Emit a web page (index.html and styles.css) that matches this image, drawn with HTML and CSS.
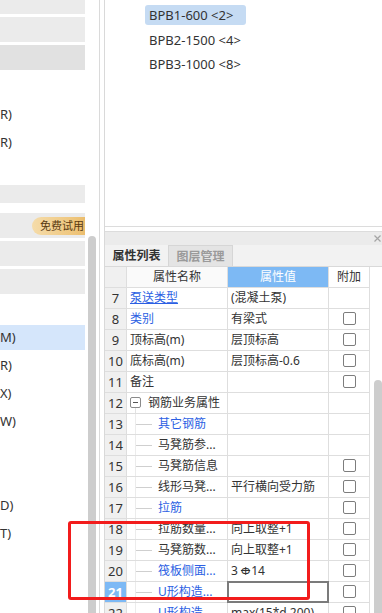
FILE: index.html
```html
<!DOCTYPE html>
<html lang="zh-CN">
<head>
<meta charset="utf-8">
<title>属性列表</title>
<link rel="stylesheet" href="styles.css">
</head>
<body>
<div class="app">
  <div class="left">
    <div class="bar b1"></div>
    <div class="bar"></div>
    <div class="bar dark"></div>
    <div class="item first">R)</div>
    <div class="item">R)</div>
    <div class="bar b4"></div>
    <div class="bar badge-bar"><span class="badge">免费试用</span></div>
    <div class="bar"></div>
    <div class="bar"></div>
    <div class="item sel">M)</div>
    <div class="item after-sel">R)</div>
    <div class="item">X)</div>
    <div class="item">W)</div>
    <div class="item gap">D)</div>
    <div class="item">T)</div>
  </div>
  <div class="lscroll"><div class="lthumb"></div></div>
  <div class="gutter"></div>
  <div class="right">
    <div class="top">
      <div class="plist">
        <div class="pitem selected">BPB1-600 &lt;2&gt;</div>
        <div class="pitem">BPB2-1500 &lt;4&gt;</div>
        <div class="pitem">BPB3-1000 &lt;8&gt;</div>
      </div>
    </div>
    <div class="props">
      <div class="titlebar">
        <svg class="close" width="7" height="7" viewBox="0 0 7 7"><path d="M0.5 0.5L6.5 6.5M6.5 0.5L0.5 6.5" stroke="#a5a5a5" stroke-width="1.2"/></svg>
      </div>
      <div class="tabs">
        <div class="tab active">属性列表</div>
        <div class="tab">图层管理</div>
      </div>
      <div class="tablewrap">
        <div class="grid">
          <div class="c num hd"></div><div class="c hd name-hd">属性名称</div><div class="c hd val-hd">属性值</div><div class="c hd add-hd">附加</div>

          <div class="c num">7</div><div class="c name link u">泵送类型</div><div class="c val">(混凝土泵)</div><div class="c add"></div>
          <div class="c num">8</div><div class="c name link">类别</div><div class="c val">有梁式</div><div class="c add"><span class="cb"></span></div>
          <div class="c num">9</div><div class="c name">顶标高(m)</div><div class="c val">层顶标高</div><div class="c add"><span class="cb"></span></div>
          <div class="c num">10</div><div class="c name">底标高(m)</div><div class="c val">层顶标高-0.6</div><div class="c add"><span class="cb"></span></div>
          <div class="c num">11</div><div class="c name">备注</div><div class="c val"></div><div class="c add"><span class="cb"></span></div>
          <div class="c num">12</div><div class="c name group"><span class="minus"></span>钢筋业务属性</div><div class="c val"></div><div class="c add"></div>
          <div class="c num">13</div><div class="c name tree link">其它钢筋</div><div class="c val"></div><div class="c add"></div>
          <div class="c num">14</div><div class="c name tree">马凳筋参...</div><div class="c val"></div><div class="c add"></div>
          <div class="c num">15</div><div class="c name tree">马凳筋信息</div><div class="c val"></div><div class="c add"><span class="cb"></span></div>
          <div class="c num">16</div><div class="c name tree">线形马凳...</div><div class="c val">平行横向受力筋</div><div class="c add"><span class="cb"></span></div>
          <div class="c num">17</div><div class="c name tree link">拉筋</div><div class="c val"></div><div class="c add"><span class="cb"></span></div>
          <div class="c num">18</div><div class="c name tree">拉筋数量...</div><div class="c val">向上取整+1</div><div class="c add"><span class="cb"></span></div>
          <div class="c num">19</div><div class="c name tree">马凳筋数...</div><div class="c val">向上取整+1</div><div class="c add"><span class="cb"></span></div>
          <div class="c num">20</div><div class="c name tree link">筏板侧面...</div><div class="c val">3<span class="rebar">Φ</span>14</div><div class="c add"><span class="cb"></span></div>
          <div class="c num cur">21</div><div class="c name tree link">U形构造...</div><div class="c val edit"></div><div class="c add"><span class="cb"></span></div>
          <div class="c num">22</div><div class="c name tree link">U形构造...</div><div class="c val">max(15*d,200)</div><div class="c add"><span class="cb"></span></div>
        </div>
        <div class="vscroll"><div class="vthumb"></div></div>
      </div>
    </div>
  </div>
  <div class="redbox"></div>
</div>
</body>
</html>
```

FILE: styles.css
```css
html, body {
  margin: 0;
  padding: 0;
  background: #fff;
}
body {
  font-family: "Noto Sans", "Noto Sans CJK SC", sans-serif;
  color: #333;
}
.app {
  position: relative;
  display: flex;
  width: 382px;
  height: 613px;
  overflow: hidden;
}

/* left panel */
.left {
  width: 85px;
  flex: none;
  overflow: hidden;
  font-size: 13px;
}
.bar {
  height: 25px;
  margin-top: 3px;
  background: #ebebeb;
}
.bar.b1 { height: 14px; margin-top: 0; }
.bar.dark { background: #e1e1e1; }
.bar.b4 { height: 18px; margin-top: 29px; }
.bar.badge-bar {
  margin-top: 10px;
  display: flex;
  align-items: center;
}
.badge {
  margin-left: 32px;
  height: 18px;
  line-height: 18px;
  padding: 0 14px 0 8px;
  border-radius: 9px 0 0 9px;
  background: linear-gradient(90deg, #f5dcaa 0%, #efc77f 60%, #e8b45c 100%);
  color: #5a3b12;
  font-size: 11px;
  white-space: nowrap;
}
.item {
  height: 28px;
  line-height: 28px;
  white-space: nowrap;
}
.item.first { margin-top: 30px; }
.item.sel {
  height: 25px;
  line-height: 25px;
  margin-top: 31px;
  background: #d5e6fb;
}
.item.after-sel { margin-top: 1px; }
.item.gap { margin-top: 56px; }

.lscroll {
  width: 14px;
  flex: none;
  padding-top: 236px;
  box-sizing: border-box;
}
.lthumb {
  margin-left: 3px;
  width: 8px;
  height: 400px;
  background: #cdcdcd;
  border-radius: 4px;
}
.gutter {
  width: 4px;
  flex: none;
  border-left: 1px solid #dadada;
}

/* right panel */
.right {
  flex: 1;
  min-width: 0;
  border-left: 1px solid #d9d9d9;
  display: flex;
  flex-direction: column;
}
.top {
  height: 226px;
  flex: none;
  border-bottom: 1px solid #dcdcdc;
}
.plist {
  padding: 5px 0 0 40px;
  display: flex;
  flex-direction: column;
  align-items: flex-start;
  gap: 4.5px;
}
.pitem {
  height: 20px;
  line-height: 20px;
  padding: 0 13px 0 4px;
  font-size: 13px;
  color: #333;
  border-radius: 3px;
  white-space: nowrap;
}
.pitem.selected { background: #c5dbf3; }

.props {
  margin-top: 4px;
  flex: 1;
  display: flex;
  flex-direction: column;
}
.titlebar {
  height: 13px;
  border-top: 1px solid #dcdcdc;
  background: #ebebeb;
  display: flex;
  justify-content: flex-end;
  align-items: center;
  padding-right: 1px;
}
.tabs {
  height: 21px;
  display: flex;
  background: #f2f2f2;
  border-bottom: 1px solid #d9d9d9;
}
.tab {
  width: 64px;
  text-align: center;
  line-height: 21px;
  font-size: 12px;
  font-weight: bold;
  color: #9a9a9a;
  background: #e4e4e4;
  border-right: 1px solid #d6d6d6;
  border-top: 1px solid #d6d6d6;
  box-sizing: border-box;
}
.tab.active {
  color: #333;
  background: #f2f2f2;
  border-top: none;
}

.tablewrap {
  display: flex;
  flex: 1;
}
.grid {
  display: grid;
  grid-template-columns: 22px 101px 101px 41px;
  grid-auto-rows: 21px;
  font-size: 12px;
}
.c {
  box-sizing: border-box;
  border-right: 1px solid #dedede;
  border-bottom: 1px solid #dedede;
  line-height: 20px;
  white-space: nowrap;
  overflow: hidden;
  position: relative;
}
.num {
  background: #f0f0f0;
  text-align: center;
  font-size: 13px;
  color: #333;
}
.num.cur {
  background: #7db9f5;
  color: #fff;
  font-weight: bold;
}
.hd { text-align: center; }
.name-hd { background: #fafafa; }
.val-hd { background: #7db9f4; color: #fff; }
.add-hd { background: #fff; }
.name { padding-left: 3px; }
.val { padding-left: 3px; }
.link { color: #2c5fe3; }
.u { text-decoration: underline; }
.name.group { padding-left: 21px; }
.minus {
  position: absolute;
  left: 3px;
  top: 4px;
  width: 11px;
  height: 11px;
  box-sizing: border-box;
  border: 1px solid #8a8a8a;
  border-radius: 2px;
}
.minus::after {
  content: "";
  position: absolute;
  left: 2px;
  top: 4px;
  width: 5px;
  height: 1px;
  background: #555;
}
.name.group::after {
  content: "";
  position: absolute;
  left: 8px;
  top: 15px;
  bottom: -1px;
  width: 1px;
  background: #e2e2e2;
}
.name.tree { padding-left: 31px; }
.name.tree::before {
  content: "";
  position: absolute;
  left: 9px;
  top: 10px;
  width: 16px;
  height: 1px;
  background: #cfcfcf;
}
.name.tree::after {
  content: "";
  position: absolute;
  left: 8px;
  top: 0;
  bottom: -1px;
  width: 1px;
  background: #ececec;
}
.rebar {
  text-decoration: line-through;
  margin: 0 1px 0 3px;
  font-size: 11px;
}
.val.edit {
  border: 2px solid #7b7b7b;
  margin: -1px 0 0 -1px;
  width: 102px;
  height: 22px;
}
.add {
  display: flex;
  justify-content: center;
  align-items: center;
  padding-bottom: 1px;
}
.cb {
  width: 13px;
  height: 13px;
  box-sizing: border-box;
  border: 1px solid #7d7d7d;
  border-radius: 2px;
  background: #fff;
}
.vscroll {
  flex: 1;
  padding: 113px 0 0 4px;
}
.vthumb {
  width: 8px;
  height: 260px;
  background: #cdcdcd;
  border-radius: 4px;
}

/* annotation overlay */
.redbox {
  position: absolute;
  left: 68px;
  top: 521px;
  width: 242px;
  height: 79px;
  box-sizing: border-box;
  border: 3px solid #f21c1c;
  border-radius: 3px;
}
```
